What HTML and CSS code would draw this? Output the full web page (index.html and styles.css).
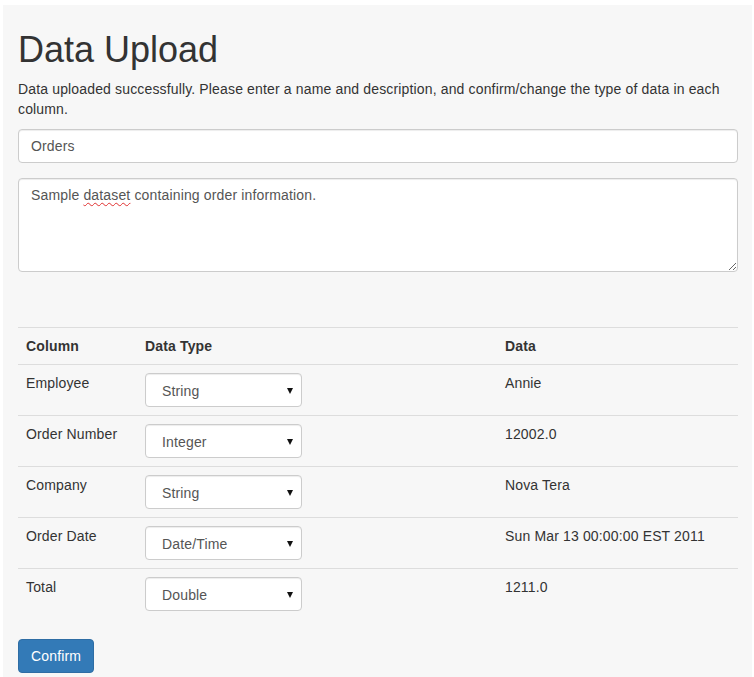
FILE: index.html
```html
<!DOCTYPE html>
<html>
<head>
<meta charset="utf-8">
<link rel="stylesheet" href="styles.css">
</head>
<body>
<div class="panel">
  <h1 class="title">Data Upload</h1>
  <p class="lead-text">Data uploaded successfully. Please enter a name and description, and confirm/change the type of data in each column.</p>
  <div class="form-group">
    <input class="form-control" type="text" value="Orders">
  </div>
  <div class="form-group">
    <div class="form-control textarea">Sample <span class="spell">dataset</span> containing order information.</div>
  </div>
  <table class="table">
    <thead>
      <tr><th class="c1">Column</th><th class="c2">Data Type</th><th class="c3">Data</th></tr>
    </thead>
    <tbody>
      <tr><td>Employee</td><td><div class="select"><span>String</span></div></td><td>Annie</td></tr>
      <tr><td>Order Number</td><td><div class="select"><span>Integer</span></div></td><td>12002.0</td></tr>
      <tr><td>Company</td><td><div class="select"><span>String</span></div></td><td>Nova Tera</td></tr>
      <tr><td>Order Date</td><td><div class="select"><span>Date/Time</span></div></td><td>Sun Mar 13 00:00:00 EST 2011</td></tr>
      <tr><td>Total</td><td><div class="select"><span>Double</span></div></td><td>1211.0</td></tr>
    </tbody>
  </table>
  <button class="btn">Confirm</button>
</div>
</body>
</html>
```
FILE: styles.css
```css
html, body {
  margin: 0;
  padding: 0;
  background: #fff;
}
body {
  padding: 5px 2px 0 3px;
  font-family: "Liberation Sans", Arial, sans-serif;
  font-size: 14px;
  line-height: 20px;
  letter-spacing: 0.15px;
  color: #333;
}
.panel {
  background: #f7f7f7;
  padding: 2px 14px 6px 15px;
  min-height: 672px;
  box-sizing: border-box;
}
.title {
  font-size: 36px;
  font-weight: 400;
  line-height: 1.1;
  letter-spacing: 0;
  margin: 23px 0 9px;
  color: #333;
}
.lead-text {
  margin: 0 0 10px;
}
.form-group {
  margin-bottom: 15px;
}
.form-control {
  display: block;
  box-sizing: border-box;
  width: 100%;
  height: 34px;
  padding: 6px 12px;
  font-family: "Liberation Sans", Arial, sans-serif;
  font-size: 14px;
  line-height: 20px;
  letter-spacing: 0.15px;
  color: #555;
  background: #fff;
  border: 1px solid #ccc;
  border-radius: 4px;
  box-shadow: inset 0 1px 1px rgba(0,0,0,.075);
  margin: 0;
}
.textarea {
  height: 94px;
  resize: both;
  overflow: auto;
  padding-top: 6px;
}
.spell {
  text-decoration: underline wavy #e03030;
  text-decoration-thickness: 1px;
  text-underline-offset: 2px;
}
.table {
  width: 100%;
  border-collapse: collapse;
  margin-top: 55px;
  margin-bottom: 20px;
}
.table th, .table td {
  padding: 8px;
  text-align: left;
  vertical-align: top;
  border-top: 1px solid #ddd;
  line-height: 20px;
}
.table th {
  font-weight: 700;
  border-bottom: 1px solid #ddd;
  vertical-align: bottom;
}
.c1 { width: 103px; }
.c2 { width: 344px; }
.select {
  position: relative;
  box-sizing: border-box;
  width: 157px;
  height: 34px;
  padding: 7px 16px 6px;
  background: #fff;
  border: 1px solid #ccc;
  border-radius: 4px;
  color: #555;
  line-height: 20px;
  box-shadow: inset 0 1px 1px rgba(0,0,0,.075);
}
.select::after {
  content: "";
  position: absolute;
  right: 8px;
  top: 14px;
  border-left: 3px solid transparent;
  border-right: 3px solid transparent;
  border-top: 6px solid #111;
}
.btn {
  display: inline-block;
  font-family: "Liberation Sans", Arial, sans-serif;
  font-size: 14px;
  line-height: 20px;
  letter-spacing: 0.15px;
  padding: 6px 12px;
  color: #fff;
  background: #337ab7;
  border: 1px solid #2e6da4;
  border-radius: 4px;
  cursor: pointer;
}
```
